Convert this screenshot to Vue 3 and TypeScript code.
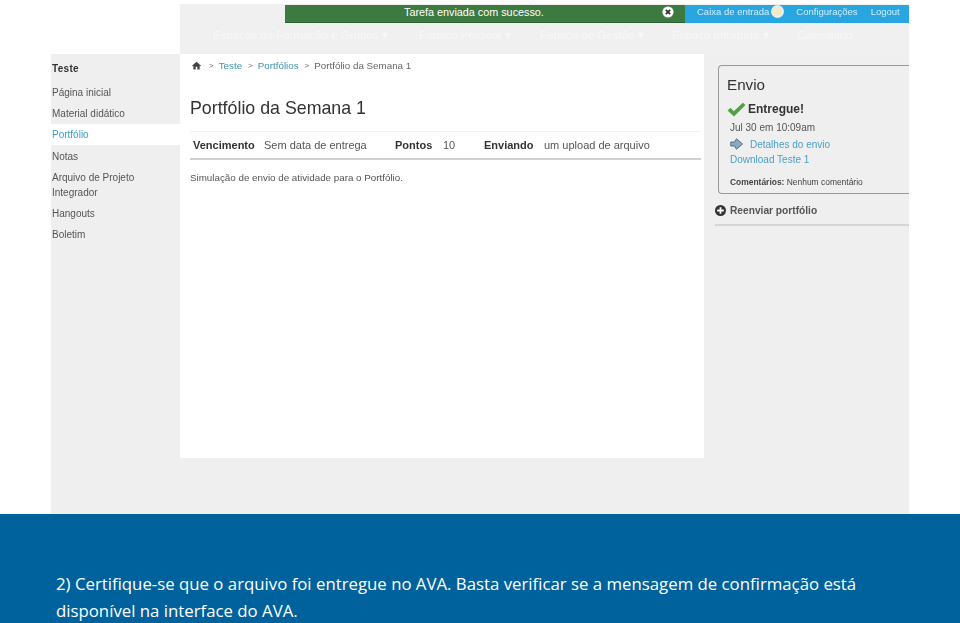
<script setup lang="ts">
const sideLinks = [
  { label: 'Página inicial' },
  { label: 'Material didático' },
  { label: 'Portfólio', active: true },
  { label: 'Notas' },
  { label: 'Arquivo de Projeto Integrador', wrap: true },
  { label: 'Hangouts' },
  { label: 'Boletim' },
]

const navItems = [
  { label: 'Espaços de Formação e Grupos ▾', width: 206 },
  { label: 'Espaço Pessoal ▾', width: 121 },
  { label: 'Espaço de Gestão ▾', width: 132 },
  { label: 'Espaço Infratrato ▾', width: 125 },
  { label: 'Calendário', width: 60 },
]
</script>

<template>
  <div class="page">
    <div class="shot">
      <header class="top">
        <div class="notice-row">
          <div class="notice">
            <span class="notice-text">Tarefa enviada com sucesso.</span>
            <svg class="close" width="12" height="12" viewBox="0 0 12 12">
              <circle cx="6" cy="6" r="5.6" fill="#fff" />
              <path d="M3.8 3.8l4.4 4.4M8.2 3.8l-4.4 4.4" stroke="#333" stroke-width="1.8" />
            </svg>
          </div>
          <div class="account">
            <span>Caixa de entrada</span>
            <span class="badge"></span>
            <span class="config">Configurações</span>
            <span class="logout">Logout</span>
          </div>
        </div>
        <nav class="nav">
          <span v-for="item in navItems" :key="item.label" :style="{ width: item.width + 'px' }">{{ item.label }}</span>
        </nav>
      </header>

      <div class="body">
        <aside class="side">
          <h4>Teste</h4>
          <a
            v-for="link in sideLinks"
            :key="link.label"
            :class="{ active: link.active, wrap: link.wrap }"
          >{{ link.label }}</a>
        </aside>

        <main class="content">
          <div class="crumbs">
            <svg width="9" height="9" viewBox="0 0 10 10">
              <path d="M5 .8L0 5.2l.6.7L1.500 5.200V9.500h2.600V6.500h1.800v3h2.600V5.200l.9.7.6-.7z" fill="#444" />
            </svg>
            <span class="sep">&gt;</span>
            <span class="link">Teste</span>
            <span class="sep">&gt;</span>
            <span class="link">Portfólios</span>
            <span class="sep">&gt;</span>
            <span>Portfólio da Semana 1</span>
          </div>
          <h1>Portfólio da Semana 1</h1>
          <div class="meta">
            <b class="k1">Vencimento</b><span class="v1">Sem data de entrega</span>
            <b class="k2">Pontos</b><span class="v2">10</span>
            <b class="k3">Enviando</b><span>um upload de arquivo</span>
          </div>
          <p class="desc">Simulação de envio de atividade para o Portfólio.</p>
        </main>

        <aside class="right">
          <div class="card">
            <h2>Envio</h2>
            <div class="done">
              <svg width="19" height="15" viewBox="0 0 19 15">
                <path d="M.5 8.500L3.500 5.800l3.300 3.400L15.800.8 18.500 3 7 14.500z" fill="#55a044" />
              </svg>
              <span>Entregue!</span>
            </div>
            <div class="date">Jul 30 em 10:09am</div>
            <div class="details">
              <svg width="13" height="12" viewBox="0 0 13 12">
                <path d="M.8 4h3.700L6.500.8 12.500 6l-6 5.200-2-3.200H.8z" fill="#86abc4" stroke="#4f6575" stroke-width=".9" />
              </svg>
              <a>Detalhes do envio</a>
            </div>
            <a class="download">Download Teste 1</a>
            <div class="comments"><b>Comentários:</b> Nenhum comentário</div>
          </div>
          <div class="resend">
            <svg width="11" height="11" viewBox="0 0 11 11">
              <circle cx="5.500" cy="5.500" r="5.500" fill="#333" />
              <path d="M5.500 2.200v6.600M2.200 5.500h6.600" stroke="#fff" stroke-width="1.800" />
            </svg>
            <span>Reenviar portfólio</span>
          </div>
        </aside>
      </div>
    </div>

    <section class="caption">
      <p>2) Certifique-se que o arquivo foi entregue no AVA. Basta verificar se a mensagem de confirmação está disponível na interface do AVA.</p>
    </section>
  </div>
</template>

<style scoped>
.page {
  width: 960px;
  height: 623px;
  overflow: hidden;
  background: #fff;
  font-family: "Liberation Sans", Arial, sans-serif;
}
.shot {
  width: 858px;
  height: 514px;
  margin-left: 51px;
  display: flex;
  flex-direction: column;
  filter: blur(0.4px);
}
.top {
  height: 54px;
  margin-left: 129px;
  padding-top: 5px;
  box-sizing: border-box;
  background: linear-gradient(#fff 0, #fff 4px, #f0f0f0 4px);
}
.notice-row {
  display: flex;
  height: 18px;
  margin-left: 105px;
}
.notice {
  width: 400px;
  display: flex;
  align-items: center;
  padding-bottom: 3px;
  background: #3c7a40;
  border-bottom: 1px solid #2d6233;
  box-sizing: border-box;
  color: #fff;
  font-size: 10.8px;
}
.notice-text {
  margin-left: 119px;
  width: 258px;
}
.account {
  width: 224px;
  display: flex;
  align-items: center;
  padding: 0 0 5px 12px;
  background: #29a6e0;
  color: #d3edf9;
  font-size: 9.500px;
  box-sizing: border-box;
}
.badge {
  width: 13px;
  height: 13px;
  margin-left: 2px;
  border-radius: 50%;
  background: radial-gradient(circle, #f2e9c8 0 35%, #dff1f7 70%);
}
.config {
  margin-left: 12px;
}
.logout {
  margin-left: 13px;
}
.nav {
  display: flex;
  margin-top: 5px;
  padding-left: 33px;
  height: 14px;
  font-size: 11.500px;
  color: #f7f7f7;
  line-height: 14px;
  white-space: nowrap;
}
.nav span {
  display: block;
}
.body {
  flex: 1;
  display: flex;
  background: #efefef;
}
.side {
  width: 129px;
  padding-top: 8px;
  font-size: 10px;
  color: #555;
}
.side h4 {
  margin: 0;
  height: 20px;
  padding-left: 1px;
  font-size: 10px;
  line-height: 14px;
  color: #333;
  letter-spacing: .3px;
}
.side a {
  display: block;
  padding: 0 0 0 1px;
  height: 21px;
  line-height: 21px;
}
.side a.active {
  background: #fff;
  color: #3a9cc4;
  margin-bottom: 1px;
}
.side a.wrap {
  height: 36px;
  line-height: 15px;
  padding-top: 3px;
  padding-right: 20px;
  box-sizing: border-box;
}
.content {
  width: 524px;
  height: 404px;
  padding: 0 3px 0 10px;
  box-sizing: border-box;
  background: #fff;
}
.crumbs {
  display: flex;
  align-items: center;
  height: 12px;
  margin-top: 5px;
  padding-left: 2px;
  font-size: 9.800px;
  color: #666;
}
.crumbs .sep {
  margin: 0 5px 0 8px;
  font-size: 8px;
}
.crumbs .sep ~ .sep {
  margin-left: 6px;
}
.link {
  color: #3f93ad;
}
h1 {
  margin: 25px 0 0;
  font-size: 17.800px;
  line-height: 24px;
  font-weight: 400;
  color: #333;
}
.meta {
  display: flex;
  align-items: center;
  height: 26px;
  margin-top: 11px;
  padding-left: 3px;
  border-top: 1px solid #f2f2f2;
  border-bottom: 2px solid #d0d0d0;
  font-size: 11px;
  color: #555;
  box-sizing: content-box;
}
.meta b {
  color: #333;
  flex: none;
}
.k1 {
  width: 71px;
}
.v1 {
  width: 131px;
  white-space: nowrap;
}
.k2 {
  width: 48px;
}
.v2 {
  width: 41px;
}
.k3 {
  width: 60px;
}
.desc {
  margin: 11px 0 0;
  font-size: 9.800px;
  line-height: 14px;
  color: #555;
}
.right {
  width: 205px;
  padding: 11px 0 0 11px;
  box-sizing: border-box;
}
.card {
  height: 129px;
  padding: 9px 0 0 8px;
  margin-left: 3px;
  box-sizing: border-box;
  border: 1px solid #9a9a9a;
  border-right: 0;
  border-radius: 4px 0 0 4px;
  color: #555;
  font-size: 10px;
}
.card h2 {
  margin: 0;
  font-size: 15.200px;
  line-height: 20px;
  font-weight: 400;
  color: #333;
}
.done {
  display: flex;
  align-items: center;
  margin-top: 6px;
  height: 16px;
  font-size: 12px;
  font-weight: 700;
  color: #333;
}
.done span {
  margin-left: 2px;
}
.date {
  margin: 3px 0 0 3px;
  line-height: 16px;
}
.details {
  display: flex;
  align-items: center;
  height: 16px;
  margin-left: 3px;
  color: #4a9fc4;
}
.details a {
  margin-left: 7px;
}
.download {
  display: block;
  margin-left: 3px;
  line-height: 16px;
  color: #4a9fc4;
}
.comments {
  margin: 7px 0 0 3px;
  font-size: 8.450px;
  line-height: 14px;
  color: #444;
}
.resend {
  display: flex;
  align-items: center;
  gap: 4px;
  height: 32px;
  padding-top: 2px;
  box-sizing: border-box;
  border-bottom: 2px solid #d6d6d6;
  font-size: 10.200px;
  font-weight: 700;
  color: #555;
}
.caption {
  height: 109px;
  padding: 57px 90px 0 56px;
  box-sizing: border-box;
  background: #00629c;
}
.caption p {
  margin: 0;
  font-family: "Open Sans", sans-serif;
  font-size: 16.800px;
  line-height: 26.500px;
  color: #fff;
}
</style>
